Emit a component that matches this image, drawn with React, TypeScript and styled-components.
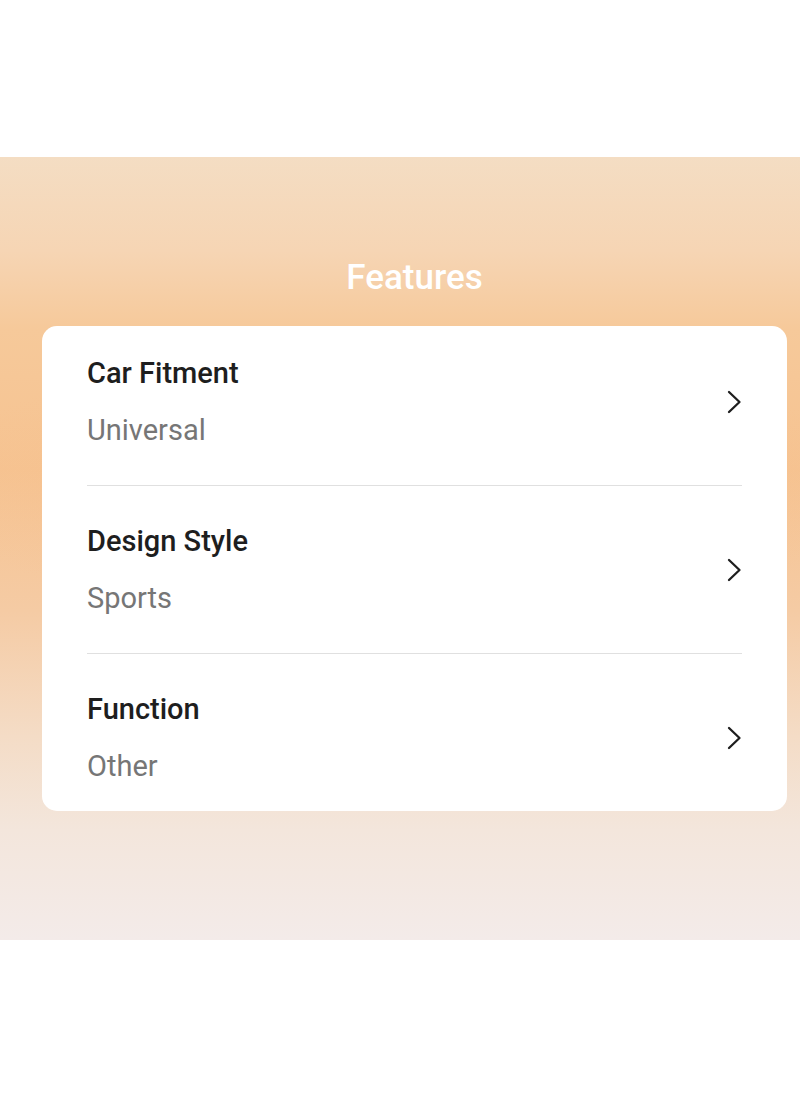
import React from 'react';
import styled, { createGlobalStyle } from 'styled-components';

const GlobalStyle = createGlobalStyle`
  html, body {
    margin: 0;
    padding: 0;
    background: #ffffff;
    font-family: Roboto, "Noto Sans", "Liberation Sans", sans-serif;
  }
`;

const Page = styled.div`
  width: 800px;
  height: 1096px;
  padding-top: 157px;
  box-sizing: border-box;
  background: #ffffff;
`;

const Panel = styled.section`
  height: 783px;
  box-sizing: border-box;
  padding: 101px 13px 0 42px;
  display: flex;
  flex-direction: column;
  background:
    radial-gradient(ellipse 60% 18% at 50% 42%, rgba(247, 190, 140, 0.5), rgba(247, 190, 140, 0) 100%),
    linear-gradient(
      180deg,
      #f4ddc3 0%,
      #f6d5b4 12%,
      #f6c99a 22%,
      #f6c391 40%,
      #f5cba4 58%,
      #f4dcc6 74%,
      #f3e6dc 86%,
      #f3ebe9 100%
    );
`;

const Title = styled.h2`
  margin: 0 0 28px;
  text-align: center;
  font-size: 35px;
  line-height: 40px;
  font-weight: 500;
  color: #ffffff;
`;

const Card = styled.div`
  background: #ffffff;
  border-radius: 15px;
  display: flex;
  flex-direction: column;
`;

const Row = styled.div`
  display: flex;
  align-items: center;
  margin: 0 45px;
  padding: 38px 0;
  border-bottom: 1px solid #e0e0e0;

  &:first-child {
    padding-top: 30px;
  }

  &:last-child {
    border-bottom: none;
    padding-bottom: 28px;
  }
`;

const Texts = styled.div`
  flex: 1;
  display: flex;
  flex-direction: column;
  gap: 23px;
`;

const Label = styled.div`
  font-size: 29px;
  line-height: 34px;
  font-weight: 500;
  color: #1e1e1e;
`;

const Value = styled.div`
  font-size: 29px;
  line-height: 34px;
  font-weight: 400;
  color: #767676;
`;

const Chevron = () => (
  <svg width="15" height="24" viewBox="0 0 15 24" fill="none">
    <polyline
      points="2,2 12.5,12 2,22"
      stroke="#1e1e1e"
      strokeWidth="2.3"
      strokeLinecap="round"
      strokeLinejoin="round"
    />
  </svg>
);

const features = [
  { label: 'Car Fitment', value: 'Universal' },
  { label: 'Design Style', value: 'Sports' },
  { label: 'Function', value: 'Other' },
];

export default function App() {
  return (
    <Page>
      <GlobalStyle />
      <Panel>
        <Title>Features</Title>
        <Card>
          {features.map((f) => (
            <Row key={f.label}>
              <Texts>
                <Label>{f.label}</Label>
                <Value>{f.value}</Value>
              </Texts>
              <Chevron />
            </Row>
          ))}
        </Card>
      </Panel>
    </Page>
  );
}
